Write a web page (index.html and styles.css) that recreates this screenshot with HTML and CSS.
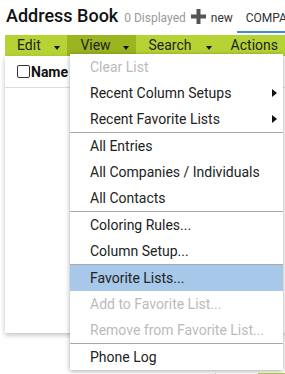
FILE: index.html
```html
<!DOCTYPE html>
<html lang="en">
<head>
    <meta charset="UTF-8">
    <meta name="viewport" content="width=device-width, initial-scale=1.0">
    <title>Address Book</title>
    <link rel="stylesheet" href="styles.css">
</head>
<body>
    <div class="header">
        <h1>Address Book</h1>
        <span class="count">0 Displayed</span>
        <span class="new">
            <svg width="15" height="15" viewBox="0 0 15 15"><path d="M5.5 0h4v5.5H15v4H9.5V15h-4V9.5H0v-4h5.5z" fill="#555"/></svg>
            new
        </span>
        <span class="tab">COMPA</span>
    </div>

    <div class="toolbar">
        <div class="tb-item tb-edit">Edit <span class="caret"></span></div>
        <div class="tb-item tb-view active">View <span class="caret"></span></div>
        <div class="tb-item tb-search">Search <span class="caret"></span></div>
        <div class="tb-item">Actions</div>
    </div>

    <div class="panel">
        <div class="grid-head">
            <span class="check"></span>
            <span class="col-name">Name</span>
        </div>
    </div>

    <div class="footer">
        <span class="foot-box"></span>
        <span class="foot-btn"></span>
    </div>

    <ul class="menu">
        <li class="disabled">Clear List</li>
        <li class="sub">Recent Column Setups</li>
        <li class="sub">Recent Favorite Lists</li>
        <li class="sep"></li>
        <li>All Entries</li>
        <li>All Companies / Individuals</li>
        <li>All Contacts</li>
        <li class="sep"></li>
        <li>Coloring Rules...</li>
        <li>Column Setup...</li>
        <li class="sep"></li>
        <li class="selected">Favorite Lists...</li>
        <li class="disabled">Add to Favorite List...</li>
        <li class="disabled">Remove from Favorite List...</li>
        <li class="sep"></li>
        <li>Phone Log</li>
    </ul>
</body>
</html>
```

FILE: styles.css
```css
body {
    margin: 0;
    font-family: Roboto, "Liberation Sans", sans-serif;
    color: #222;
    overflow: hidden;
    height: 374px;
    position: relative;
}
.header {
    display: flex;
    align-items: baseline;
    height: 35px;
    padding-left: 6px;
    box-sizing: border-box;
    white-space: nowrap;
}
h1 {
    font-size: 18px;
    font-weight: 500;
    margin: 0;
    line-height: 31px;
    color: #111;
}
.count {
    font-size: 12px;
    color: #999;
    margin-left: 6px;
}
.new {
    font-size: 12px;
    color: #333;
    margin-left: 5px;
}
.new svg {
    vertical-align: -2px;
    margin-right: 2px;
}
.tab {
    flex: 1;
    font-size: 12px;
    color: #333;
    margin-left: 4px;
    padding: 0 0 6px 9px;
    border-bottom: 2px solid #3d8ed3;
}
.toolbar {
    display: flex;
    height: 21px;
    margin-left: 5px;
    background-color: #b6d335;
    font-size: 14px;
    line-height: 21px;
    white-space: nowrap;
}
.tb-item {
    display: flex;
    align-items: center;
    justify-content: space-between;
    padding: 0 7px 0 12px;
    box-sizing: border-box;
}
.tb-edit { width: 65px; }
.tb-view { width: 72px; padding-left: 13px; }
.tb-search { width: 86px; }
.active {
    background-color: #9ab51f;
}
.caret {
    width: 0;
    height: 0;
    border-left: 3.5px solid transparent;
    border-right: 3.5px solid transparent;
    border-top: 4px solid #111;
    margin-top: 4px;
}
.panel {
    margin-left: 5px;
    height: 277px;
    background: #fff;
    box-shadow: 0 2px 5px rgba(0, 0, 0, 0.25);
}
.grid-head {
    display: flex;
    align-items: center;
    height: 31px;
    padding-left: 12px;
    border-bottom: 1px solid #ddd;
}
.check {
    width: 11px;
    height: 11px;
    border: 1px solid #333;
    border-radius: 2px;
    margin-right: 1px;
}
.col-name {
    font-size: 14px;
    font-weight: bold;
    color: #111;
}
.footer {
    display: flex;
    margin-top: 40px;
    height: 10px;
}
.foot-box {
    width: 42px;
    margin-left: 215px;
    border-left: 1px solid #ccc;
}
.foot-btn {
    flex: 1;
    background-color: #b6d335;
}
.menu {
    position: absolute;
    left: 70px;
    top: 54px;
    width: 213px;
    margin: 0;
    padding: 0;
    list-style: none;
    background: #fff;
    box-shadow: 0 1px 5px rgba(0, 0, 0, 0.35);
    font-size: 14px;
    white-space: nowrap;
}
.menu li {
    height: 26px;
    line-height: 26px;
    padding-left: 20px;
    color: #222;
    position: relative;
}
.menu li.sep {
    height: 1px;
    padding: 0;
    background-color: #aaa;
}
.menu li.disabled {
    color: #bbb;
}
.menu li.selected {
    background-color: #a7c8e8;
}
.menu li.sub::after {
    content: "";
    position: absolute;
    right: 6px;
    top: 9px;
    border-top: 4px solid transparent;
    border-bottom: 4px solid transparent;
    border-left: 5px solid #111;
}
```
